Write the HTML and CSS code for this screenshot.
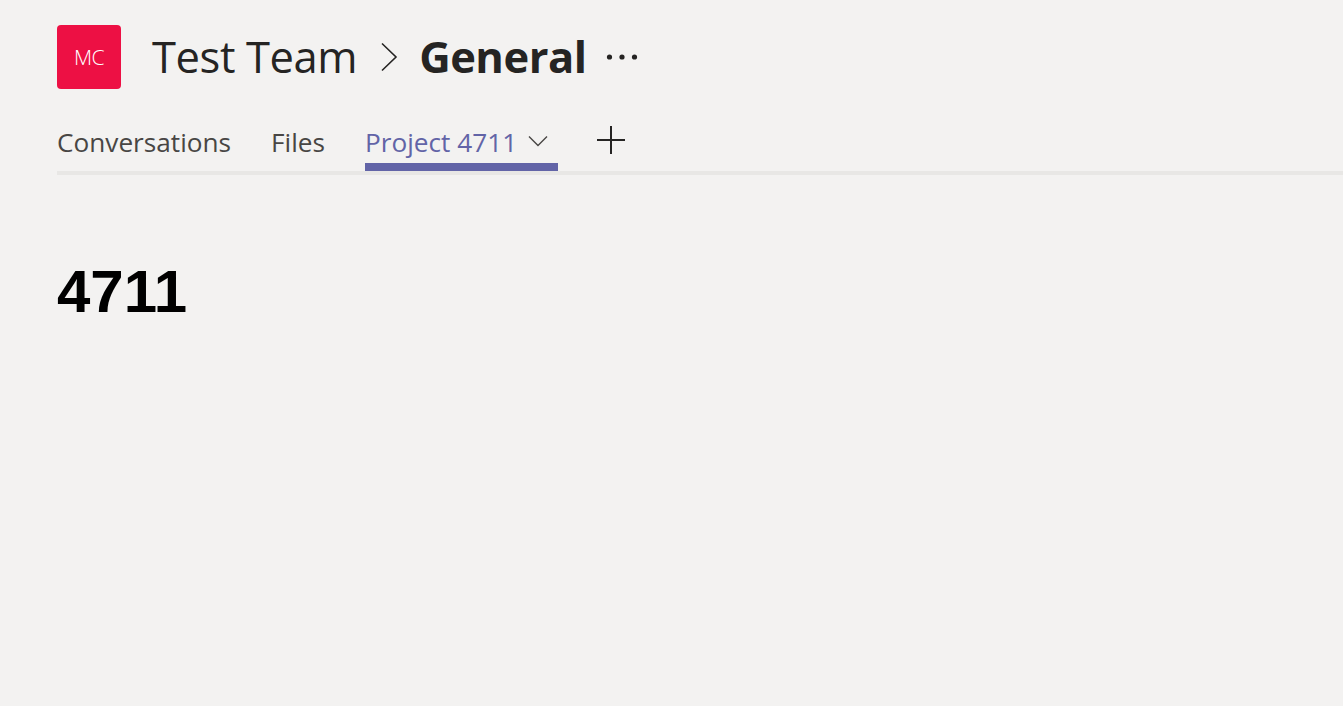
FILE: index.html
```html
<!DOCTYPE html>
<html lang="en">
<head>
<meta charset="utf-8">
<title>Test Team - General</title>
<link rel="stylesheet" href="styles.css">
</head>
<body>
<div class="page">
  <header class="header">
    <div class="avatar">MC</div>
    <div class="title">
      <span class="team">Test Team</span>
      <svg class="crumb" width="18" height="30" viewBox="0 0 18 30"><path d="M2 1.5 L16 15 L2 28.5" fill="none" stroke="#252423" stroke-width="1.6"/></svg>
      <span class="channel">General</span>
      <svg class="more" width="32" height="8" viewBox="0 0 32 8"><circle cx="3.5" cy="4" r="2.6" fill="#252423"/><circle cx="16" cy="4" r="2.6" fill="#252423"/><circle cx="28.5" cy="4" r="2.6" fill="#252423"/></svg>
    </div>
  </header>
  <nav class="tabs">
    <div class="tab">Conversations</div>
    <div class="tab">Files</div>
    <div class="tab active">Project 4711
      <svg class="caret" width="20" height="12" viewBox="0 0 20 12"><path d="M1 1.5 L10 10.5 L19 1.5" fill="none" stroke="#484644" stroke-width="1.4"/></svg>
    </div>
    <div class="tab add">
      <svg width="28" height="28" viewBox="0 0 28 28"><path d="M14 0 V28 M0 14 H28" stroke="#252423" stroke-width="2"/></svg>
    </div>
  </nav>
  <main class="content">
    <h1 class="number">4711</h1>
  </main>
</div>
</body>
</html>
```
FILE: styles.css
```css
html, body {
  margin: 0;
  padding: 0;
  background: #f3f2f1;
}
body {
  font-family: "Open Sans", "Noto Sans", sans-serif;
  color: #252423;
}
.page {
  padding-left: 57px;
}
.header {
  display: flex;
  align-items: center;
  padding-top: 25px;
  height: 64px;
}
.avatar {
  width: 64px;
  height: 64px;
  border-radius: 4px;
  background: #ed1044;
  color: #fff;
  font-size: 21px;
  font-weight: 300;
  display: flex;
  align-items: center;
  justify-content: center;
  letter-spacing: -0.5px;
}
.title {
  display: flex;
  align-items: center;
  margin-left: 31px;
  font-size: 43.5px;
  line-height: 1;
}
.team {
  font-weight: 400;
  letter-spacing: -0.4px;
}
.crumb {
  margin: 0 21px 0 23px;
}
.channel {
  font-weight: 700;
  letter-spacing: -0.5px;
}
.more {
  margin-left: 20px;
}
.tabs {
  display: flex;
  align-items: stretch;
  margin-top: 35px;
  border-bottom: 4px solid #e8e7e5;
}
.tab {
  font-size: 26.2px;
  line-height: 36px;
  color: #484644;
  margin-right: 40px;
  padding-bottom: 3px;
  border-bottom: 8px solid transparent;
  display: flex;
  align-items: center;
}
.tab.active {
  color: #6264a7;
  border-bottom-color: #6264a7;
  padding-right: 10px;
  margin-right: 39px;
}
.caret {
  margin-left: 11px;
  margin-top: -2px;
}
.tab.add {
  align-items: flex-start;
  margin-top: 2px;
}
.content {
  padding-top: 87px;
}
.number {
  margin: 0;
  font-family: "Liberation Sans", Arial, sans-serif;
  font-weight: 700;
  font-size: 60px;
  line-height: 1;
  color: #000;
}
```
